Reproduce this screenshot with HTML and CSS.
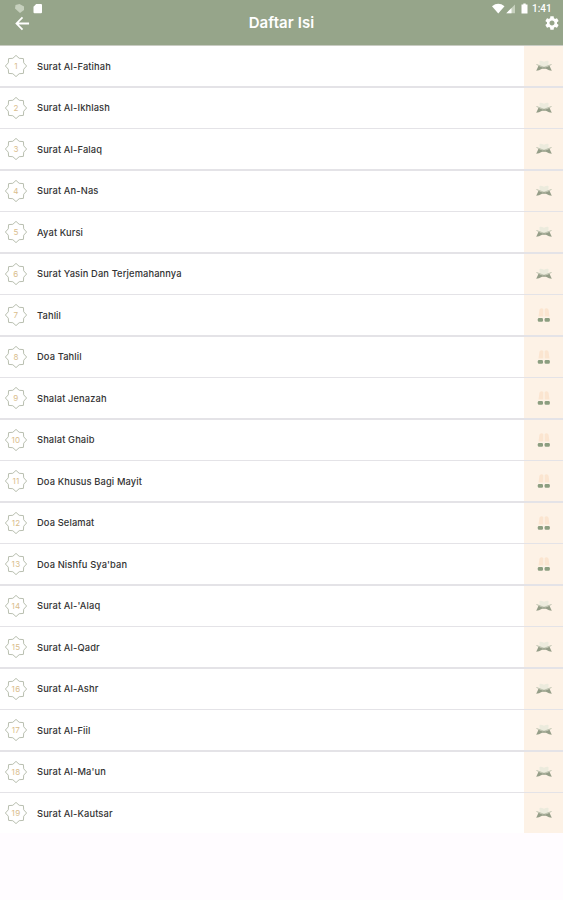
FILE: index.html
```
<!DOCTYPE html>
<html lang="id">
<head>
    <meta charset="UTF-8">
    <meta name="viewport" content="width=device-width, initial-scale=1.0">
    <title>Daftar Isi</title>
    <link rel="stylesheet" href="styles.css">
</head>
<body>
    <svg class="sprite">
        <symbol id="star" viewBox="0 0 24 24">
            <path d="M12 1.4 15.2 4.3 19.4 4.6 19.7 8.8 22.6 12 19.7 15.2 19.4 19.4 15.2 19.7 12 22.6 8.8 19.7 4.6 19.4 4.3 15.2 1.4 12 4.3 8.8 4.6 4.6 8.8 4.3Z" fill="none" stroke="#b9bfb0" stroke-width="1"/>
        </symbol>
        <!-- open book on a stand -->
        <symbol id="quran" viewBox="0 0 18 16">
            <path d="M4.500 3Q6.500 2.500 9 3.800Q11.500 2.500 13.500 3V8L9 9.500 4.500 8Z" fill="#ecebdd"/>
            <path d="M1.500 6.500 9 9.300 16.500 6.500" fill="none" stroke="#bcc2ae" stroke-width="1"/>
            <path d="M3.500 7.800 7 9.200H11L14.500 7.800 15.500 10 16.800 12.800 14 12.200 11 10.800H7L4 12.200 1.200 12.800 2.500 10Z" fill="#949d87"/>
        </symbol>
        <!-- praying hands -->
        <symbol id="doa" viewBox="0 0 18 16">
            <path d="M4.500 2.500Q6.500.500 8.300 2V9.500H3.500ZM13.500 2.500Q11.500.500 9.700 2V9.500H14.500Z" fill="#fbe5d0"/>
            <rect x="2.800" y="11" width="5.200" height="3.800" rx="1.200" fill="#8c9e80"/>
            <rect x="9.600" y="11" width="5.200" height="3.800" rx="1.200" fill="#8c9e80"/>
        </symbol>
    </svg>

    <header class="header">
        <div class="status-bar">
            <svg class="status-left" viewBox="0 0 30 12">
                <path d="M5.500 1 10 3.500V7L6 10 1 5.500 1.500 2Z" fill="#c6d0bd"/>
                <path d="M22.200 1H27Q28 1 28 2V9.300Q28 10.300 27 10.300H20.500Q19.500 10.300 19.500 9.300V3.700Z" fill="#fff"/>
            </svg>
            <svg class="status-right" viewBox="0 0 40 12">
                <path d="M0 3.200Q6.200-1.500 12.500 3.200L6.250 10.400Z" fill="#fff"/>
                <path d="M23 1.500V10.200H14.300Z" fill="#c6d0bd"/>
                <path d="M19.500 5V10.200H14.300Z" fill="#fff"/>
                <path d="M31.300.500H33.700V1.500H35.500V10.500H29.500V1.500H31.300Z" fill="#fff"/>
            </svg>
            <span class="time">1:41</span>
        </div>
        <div class="toolbar">
            <svg class="back" viewBox="0 0 16 16">
                <path d="M15 8H2M8 1.500 1.600 8 8 14.500" fill="none" stroke="#fff" stroke-width="1.900"/>
            </svg>
            <h1>Daftar Isi</h1>
            <svg class="settings" viewBox="2 2 20 20">
                <path d="M19.140 12.940c.040-.300.060-.610.060-.940 0-.320-.020-.640-.070-.940l2.030-1.580c.180-.140.230-.410.120-.610l-1.920-3.320c-.120-.220-.370-.290-.590-.220l-2.390.960c-.500-.380-1.030-.700-1.620-.940l-.360-2.540c-.040-.240-.240-.410-.480-.410h-3.840c-.240 0-.430.170-.470.410l-.360 2.540c-.590.240-1.130.570-1.620.940l-2.390-.960c-.220-.080-.470 0-.590.220L2.740 8.870c-.120.210-.080.470.120.610l2.030 1.580c-.050.300-.090.630-.090.940s.020.640.070.940l-2.030 1.580c-.180.140-.230.410-.120.610l1.920 3.320c.120.220.370.290.590.220l2.390-.960c.500.380 1.030.700 1.620.940l.360 2.540c.050.240.240.410.480.410h3.840c.240 0 .440-.170.470-.410l.360-2.540c.590-.240 1.130-.560 1.620-.940l2.390.960c.220.080.470 0 .590-.220l1.920-3.320c.120-.220.070-.470-.120-.610l-2.010-1.580zM12 15.600c-1.980 0-3.600-1.620-3.600-3.600s1.620-3.600 3.600-3.600 3.600 1.620 3.600 3.600-1.620 3.600-3.600 3.600z" fill="#fff"/>
            </svg>
        </div>
    </header>

    <ul class="list">
        <li class="item">
            <span class="number"><svg><use href="#star"/></svg><b>1</b></span>
            <span class="name">Surat Al-Fatihah</span>
            <span class="type"><svg><use href="#quran"/></svg></span>
        </li>
        <li class="item">
            <span class="number"><svg><use href="#star"/></svg><b>2</b></span>
            <span class="name">Surat Al-Ikhlash</span>
            <span class="type"><svg><use href="#quran"/></svg></span>
        </li>
        <li class="item">
            <span class="number"><svg><use href="#star"/></svg><b>3</b></span>
            <span class="name">Surat Al-Falaq</span>
            <span class="type"><svg><use href="#quran"/></svg></span>
        </li>
        <li class="item">
            <span class="number"><svg><use href="#star"/></svg><b>4</b></span>
            <span class="name">Surat An-Nas</span>
            <span class="type"><svg><use href="#quran"/></svg></span>
        </li>
        <li class="item">
            <span class="number"><svg><use href="#star"/></svg><b>5</b></span>
            <span class="name">Ayat Kursi</span>
            <span class="type"><svg><use href="#quran"/></svg></span>
        </li>
        <li class="item">
            <span class="number"><svg><use href="#star"/></svg><b>6</b></span>
            <span class="name">Surat Yasin Dan Terjemahannya</span>
            <span class="type"><svg><use href="#quran"/></svg></span>
        </li>
        <li class="item">
            <span class="number"><svg><use href="#star"/></svg><b>7</b></span>
            <span class="name">Tahlil</span>
            <span class="type"><svg><use href="#doa"/></svg></span>
        </li>
        <li class="item">
            <span class="number"><svg><use href="#star"/></svg><b>8</b></span>
            <span class="name">Doa Tahlil</span>
            <span class="type"><svg><use href="#doa"/></svg></span>
        </li>
        <li class="item">
            <span class="number"><svg><use href="#star"/></svg><b>9</b></span>
            <span class="name">Shalat Jenazah</span>
            <span class="type"><svg><use href="#doa"/></svg></span>
        </li>
        <li class="item">
            <span class="number"><svg><use href="#star"/></svg><b>10</b></span>
            <span class="name">Shalat Ghaib</span>
            <span class="type"><svg><use href="#doa"/></svg></span>
        </li>
        <li class="item">
            <span class="number"><svg><use href="#star"/></svg><b>11</b></span>
            <span class="name">Doa Khusus Bagi Mayit</span>
            <span class="type"><svg><use href="#doa"/></svg></span>
        </li>
        <li class="item">
            <span class="number"><svg><use href="#star"/></svg><b>12</b></span>
            <span class="name">Doa Selamat</span>
            <span class="type"><svg><use href="#doa"/></svg></span>
        </li>
        <li class="item">
            <span class="number"><svg><use href="#star"/></svg><b>13</b></span>
            <span class="name">Doa Nishfu Sya'ban</span>
            <span class="type"><svg><use href="#doa"/></svg></span>
        </li>
        <li class="item">
            <span class="number"><svg><use href="#star"/></svg><b>14</b></span>
            <span class="name">Surat Al-'Alaq</span>
            <span class="type"><svg><use href="#quran"/></svg></span>
        </li>
        <li class="item">
            <span class="number"><svg><use href="#star"/></svg><b>15</b></span>
            <span class="name">Surat Al-Qadr</span>
            <span class="type"><svg><use href="#quran"/></svg></span>
        </li>
        <li class="item">
            <span class="number"><svg><use href="#star"/></svg><b>16</b></span>
            <span class="name">Surat Al-Ashr</span>
            <span class="type"><svg><use href="#quran"/></svg></span>
        </li>
        <li class="item">
            <span class="number"><svg><use href="#star"/></svg><b>17</b></span>
            <span class="name">Surat Al-Fiil</span>
            <span class="type"><svg><use href="#quran"/></svg></span>
        </li>
        <li class="item">
            <span class="number"><svg><use href="#star"/></svg><b>18</b></span>
            <span class="name">Surat Al-Ma'un</span>
            <span class="type"><svg><use href="#quran"/></svg></span>
        </li>
        <li class="item">
            <span class="number"><svg><use href="#star"/></svg><b>19</b></span>
            <span class="name">Surat Al-Kautsar</span>
            <span class="type"><svg><use href="#quran"/></svg></span>
        </li>
    </ul>
</body>
</html>
```
FILE: styles.css
```
body {
    margin: 0;
    font-family: Inter, Roboto, sans-serif;
    background-color: #fffcff;
}

.sprite {
    display: none;
}

.header {
    height: 45px;
    border-bottom: 1px solid #c9ccc3;
    background-color: #96a58a;
    color: #fff;
}

.status-bar {
    display: flex;
    align-items: center;
    height: 12px;
    padding: 3px 12px 0 14px;
}

.status-left {
    width: 30px;
    height: 12px;
}

.status-right {
    width: 40px;
    height: 12px;
    margin-left: auto;
}

.time {
    width: 19px;
    font-family: Roboto, sans-serif;
    font-size: 10px;
    font-weight: 500;
    line-height: 12px;
    white-space: nowrap;
}

.toolbar {
    display: grid;
    grid-template-columns: 1fr auto 1fr;
    align-items: center;
    height: 16px;
    padding: 0 4px 0 15px;
}

.back {
    width: 15px;
    height: 15px;
}

.toolbar h1 {
    margin: 0 11px 0 0;
    font-size: 15px;
    font-weight: 600;
    line-height: 16px;
    letter-spacing: 0.1px;
}

.settings {
    width: 14px;
    height: 14px;
    justify-self: end;
}

.list {
    display: grid;
    grid-auto-rows: 40px;
    gap: 1.5px;
    margin: 0;
    padding: 0;
    list-style: none;
    background-color: #e4e3e7;
}

.item {
    display: flex;
    align-items: center;
    background-color: #fff;
}

.number {
    display: grid;
    place-items: center;
    width: 24px;
    height: 24px;
    margin: 0 9px 0 4px;
}

.number svg,
.number b {
    grid-area: 1 / 1;
}

.number svg {
    width: 24px;
    height: 24px;
}

.number b {
    color: #d9bd8c;
    font-size: 8px;
    font-weight: 400;
    letter-spacing: 0.3px;
}

.name {
    color: #333;
    font-size: 9.3px;
    font-weight: 500;
    letter-spacing: 0.13px;
}

.type {
    display: flex;
    align-items: center;
    justify-content: center;
    width: 39px;
    height: 100%;
    margin-left: auto;
    background-color: #fdf2e6;
}

.type svg {
    width: 18px;
    height: 16px;
}
```
